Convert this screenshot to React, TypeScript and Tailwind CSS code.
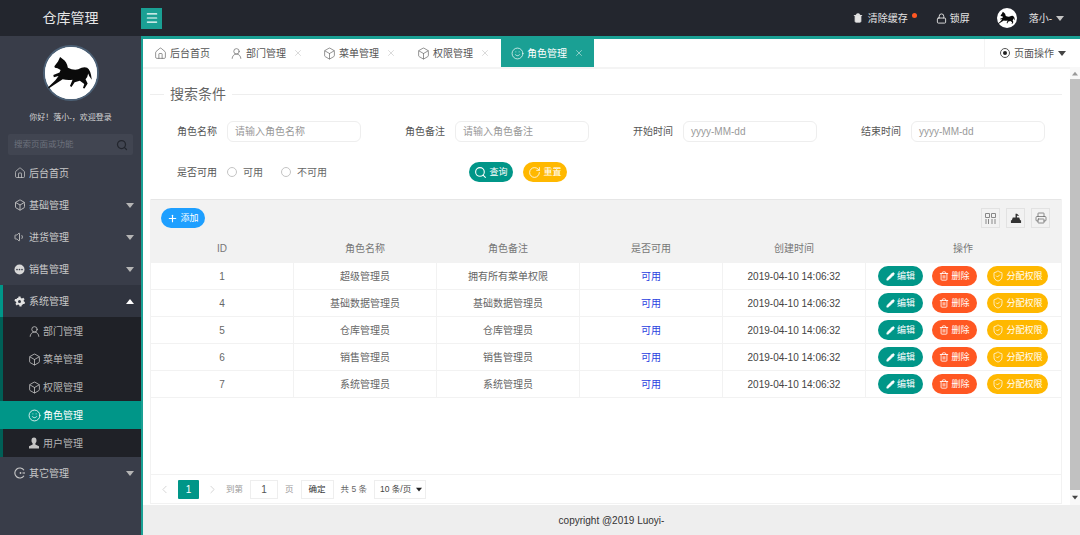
import { Box, ChevronLeft, ChevronRight, Home, Lock, Menu, Pencil, Plus, Printer, RotateCw, Search, ShieldCheck, Smile, Trash2, UserRound, Volume1, X } from "lucide-react";
import type { ReactNode } from "react";

const roles = [
  { id: 1, name: "超级管理员", note: "拥有所有菜单权限" },
  { id: 4, name: "基础数据管理员", note: "基础数据管理员" },
  { id: 5, name: "仓库管理员", note: "仓库管理员" },
  { id: 6, name: "销售管理员", note: "销售管理员" },
  { id: 7, name: "系统管理员", note: "系统管理员" },
];

function Horse({ size }: { size: number }) {
  return (
    <svg width={size} height={size} viewBox="0 0 50 50" className="shrink-0">
      <circle cx="25" cy="25" r="25" fill="#fff" />
      <path
        d="M14.500 9.500 L17 11.500 Q21 14 22 20 Q27 22.500 32 21.500 Q37 18.500 40.500 20 Q44 22 45 31.500 L42.500 28 L41.500 25.500 Q41 29.500 39 31 L41 35 L38 40 L36.500 39.500 L37.800 35.500 L33.500 32.500 Q31 33 28.500 34 L25.500 38.500 L24 37.500 L26.500 31.500 Q21 32 17 31 L10 35.500 L3.500 40 L3 38.800 L10 32 L13 27.800 L8.500 29 L8 27 L14 24.500 L15 22 L12 20.500 L9.500 20 L9 18.500 L12.500 14 Z"
        fill="#0a0a0a"
      />
    </svg>
  );
}

function Caret({ up, className }: { up?: boolean; className: string }) {
  return (
    <span
      className={`h-0 w-0 border-x-[4px] border-x-transparent ${up ? "border-b-[5px]" : "border-t-[5px]"} ${className}`}
    />
  );
}

function ChatIcon() {
  return (
    <svg width="11" height="11" viewBox="0 0 22 22" fill="#d8d8d8">
      <path d="M11 1a10 10 0 1 0 0 20 10 10 0 0 0 0-20Z" />
      <circle cx="6" cy="11" r="1.7" fill="#393d49" />
      <circle cx="11" cy="11" r="1.7" fill="#393d49" />
      <circle cx="16" cy="11" r="1.7" fill="#393d49" />
    </svg>
  );
}

function GearIcon() {
  return (
    <svg width="11" height="11" viewBox="0 0 22 22" fill="#e2e2e2">
      <path d="M9 1h4l.6 3 2.4 1 2.6-1.600 2.600 3.200-2 2.200.5 2.400 2.300 1-1 4-3-.2-1.500 2-1 .2-.5 3h-4l-.6-3-2.400-1-2.600 1.600-2.600-3.200 2-2.200L3.300 11 1 10l1-4 3 .2L6.500 4 8.400 3.800Z" />
      <circle cx="11" cy="11" r="3" fill="#30343f" />
    </svg>
  );
}

function OtherIcon() {
  return (
    <svg width="12" height="12" viewBox="0 0 24 24" fill="none" stroke="#c8c8c8" strokeWidth="2.2">
      <path d="M20 6.500A10 10 0 1 0 20 17.500" />
      <circle cx="13" cy="12" r="1.800" fill="#c8c8c8" stroke="none" />
      <path d="M17 12h5" />
    </svg>
  );
}

function PersonIcon() {
  return (
    <svg width="12" height="12" viewBox="0 0 24 24" fill="#c4c4c4">
      <path d="M12 1c3.500 0 5 2.600 5 6 0 2.600-1 4.600-2.300 5.800v2.200L22 18.500V23H2v-4.500L9.300 15v-2.200C8 11.600 7 9.600 7 7c0-3.400 1.500-6 5-6Z" />
    </svg>
  );
}

function NavRow({ icon, label, open }: { icon: ReactNode; label: string; open?: boolean }) {
  return (
    <div className={`relative flex h-[32px] items-center pl-[14px] pr-[7px] text-[10px] text-[#c8c8c8] ${open ? "bg-[#30343f]" : ""}`}>
      {open && <span className="absolute inset-y-0 left-0 w-[3px] bg-[#009688]" />}
      <span className="flex w-[15px] shrink-0 items-center">{icon}</span>
      <span className="flex-1">{label}</span>
      <Caret up={open} className={open ? "border-b-white" : "border-t-[#b5b5b5]"} />
    </div>
  );
}

function SubRow({ icon, label, active }: { icon: ReactNode; label: string; active?: boolean }) {
  return (
    <div className={`flex h-[28px] items-center text-[10px] ${active ? "-ml-[3px] bg-[#009688] pl-[28px] text-white" : "pl-[25px] text-[#b4b4b4]"}`}>
      <span className="flex w-[15px] shrink-0 items-center">{icon}</span>
      {label}
    </div>
  );
}

function Sidebar() {
  const iconCls = "h-[12px] w-[12px] text-[#c4c4c4]";
  const subIcon = "h-[13px] w-[13px] text-[#c4c4c4]";
  return (
    <aside className="flex w-[141px] shrink-0 flex-col bg-[#393d49]">
      <div className="flex flex-col items-center pt-[9px]">
        <div className="rounded-full border-[2px] border-[#4d6176] bg-white">
          <Horse size={52} />
        </div>
        <p className="mt-[11px] text-[8px] leading-[12px] text-[#d4d4d4]">你好！落小-，欢迎登录</p>
      </div>
      <div className="mx-[8px] mt-[10px] flex h-[21px] items-center justify-between rounded-[2px] bg-[#414551] pl-[6px] pr-[5px] text-[8.5px] text-[#6d717c]">
        搜索页面或功能
        <Search className="h-[12px] w-[12px] text-[#23262e]" strokeWidth={2.5} />
      </div>
      <nav className="mt-[2px]">
        <div className="flex h-[32px] items-center pl-[14px] text-[10px] text-[#c8c8c8]">
          <Home className="mr-[3px] h-[12px] w-[12px]" strokeWidth={1.5} />
          后台首页
        </div>
        <NavRow icon={<Box className={iconCls} strokeWidth={1.8} />} label="基础管理" />
        <NavRow icon={<Volume1 className={iconCls} strokeWidth={1.8} />} label="进货管理" />
        <NavRow icon={<ChatIcon />} label="销售管理" />
        <NavRow icon={<GearIcon />} label="系统管理" open />
        <div className="border-l-[3px] border-[#005f56] bg-[#1f2127]">
          <SubRow icon={<UserRound className={subIcon} strokeWidth={1.5} />} label="部门管理" />
          <SubRow icon={<Box className={subIcon} strokeWidth={1.5} />} label="菜单管理" />
          <SubRow icon={<Box className={subIcon} strokeWidth={1.5} />} label="权限管理" />
          <SubRow icon={<Smile className="h-[13px] w-[13px] text-white" strokeWidth={1.5} />} label="角色管理" active />
          <SubRow icon={<PersonIcon />} label="用户管理" />
        </div>
        <NavRow icon={<OtherIcon />} label="其它管理" />
      </nav>
    </aside>
  );
}

function Tab({ icon, label, closable = true, active, className }: { icon: ReactNode; label: string; closable?: boolean; active?: boolean; className?: string }) {
  return (
    <div className={`flex h-full items-center gap-[4px] px-[10px] text-[10px] ${active ? "bg-[#1aa094] text-white" : "text-[#555]"} ${className ?? ""}`}>
      <span className="flex w-[12px] items-center">{icon}</span>
      <span className="w-[40px]">{label}</span>
      {closable && <X className={`ml-[3px] h-[10px] w-[10px] ${active ? "text-[#cfe9e6]" : "text-[#c4c4c4]"}`} strokeWidth={1.5} />}
    </div>
  );
}

function Field({ label, placeholder }: { label: string; placeholder: string }) {
  return (
    <div className="flex items-center">
      <span className="w-[40px] text-[10px] text-[#555]">{label}</span>
      <div className="ml-[10px] flex h-[21px] w-[134px] items-center rounded-[6px] border border-[#eeeeee] px-[7px] text-[10px] text-[#999]">
        {placeholder}
      </div>
    </div>
  );
}

function Pill({ color, icon, label, className }: { color: string; icon: ReactNode; label: string; className?: string }) {
  return (
    <div className={`flex h-[20px] items-center justify-center gap-[2px] rounded-full text-[9px] text-white ${color} ${className ?? ""}`}>
      {icon}
      <span className="pt-[2px]">{label}</span>
    </div>
  );
}

function ToolBtn({ children }: { children: ReactNode }) {
  return <div className="flex h-[20px] w-[19px] items-center justify-center border border-[#e2e2e2]">{children}</div>;
}

const cell = "flex items-center justify-center border-r border-[#f2f2f2] text-[10px]";

function RoleTable() {
  return (
    <div className="grid grid-cols-[143px_143px_143px_143px_143px_195px]">
      {["ID", "角色名称", "角色备注", "是否可用", "创建时间", "操作"].map((h) => (
        <div key={h} className={`${cell} h-[27px] bg-[#f2f2f2] pb-[2px] text-[#777]`}>
          {h}
        </div>
      ))}
      {roles.map((r) => (
        <div key={r.id} className="col-span-6 grid h-[27px] grid-cols-subgrid border-b border-[#f2f2f2]">
          <div className={`${cell} text-[#666]`}>{r.id}</div>
          <div className={`${cell} text-[#666]`}>{r.name}</div>
          <div className={`${cell} text-[#666]`}>{r.note}</div>
          <div className={`${cell} text-[#2a3fe0]`}>可用</div>
          <div className={`${cell} text-[#444]`}>2019-04-10 14:06:32</div>
          <div className="flex items-center pl-[12px]">
            <Pill color="bg-[#009688]" className="w-[45px]" label="编辑" icon={<Pencil className="h-[9px] w-[9px]" fill="white" />} />
            <Pill color="bg-[#ff5722]" className="ml-[9px] w-[45px]" label="删除" icon={<Trash2 className="h-[10px] w-[10px]" />} />
            <Pill color="bg-[#ffb800]" className="ml-[10px] w-[61px]" label="分配权限" icon={<ShieldCheck className="h-[12px] w-[12px]" strokeWidth={1.5} />} />
          </div>
        </div>
      ))}
    </div>
  );
}

function Pagination() {
  return (
    <div className="flex h-[30px] items-center border-y border-[#f2f2f2] pl-[7px] text-[8.5px] text-[#999]">
      <ChevronLeft className="h-[13px] w-[13px] text-[#ccc]" strokeWidth={1.5} />
      <span className="ml-[7px] flex h-[19px] w-[21px] items-center justify-center rounded-[1px] bg-[#009688] text-[10px] text-white">1</span>
      <ChevronRight className="ml-[7px] h-[13px] w-[13px] text-[#ccc]" strokeWidth={1.5} />
      <span className="ml-[7px]">到第</span>
      <span className="ml-[7px] flex h-[19px] w-[28px] items-center justify-center border border-[#eeeeee] text-[10px] text-[#555]">1</span>
      <span className="ml-[7px]">页</span>
      <span className="ml-[7px] flex h-[19px] w-[33px] items-center justify-center border border-[#eeeeee] text-[#333]">确定</span>
      <span className="ml-[7px] text-[#666]">共 5 条</span>
      <span className="ml-[7px] flex h-[19px] w-[52px] items-center justify-between whitespace-nowrap border border-[#eeeeee] pl-[5px] pr-[2px] text-[#444]">
        10 条/页
        <Caret className="scale-75 border-t-[#222]" />
      </span>
    </div>
  );
}

export default function App() {
  const tabIcon = "h-[13px] w-[13px] text-[#666] shrink-0";
  return (
    <div className="flex h-[535px] w-[1080px] flex-col overflow-hidden bg-white font-['Liberation_Sans','Noto_Sans_CJK_SC',sans-serif]">
      <header className="flex h-[36px] shrink-0 items-center bg-[#23262e] text-[10px] text-[#e4e4e4]">
        <div className="w-[141px] text-center text-[14px] text-[#e6e6e6]">仓库管理</div>
        <div className="flex h-[21px] w-[21px] items-center justify-center bg-[#1aa094]">
          <Menu className="h-[14px] w-[14px] text-white" />
        </div>
        <div className="ml-auto flex items-center pr-[16px]">
          <Trash2 className="h-[10px] w-[10px]" fill="#e4e4e4" />
          <span className="ml-[5px]">清除缓存</span>
          <span className="mb-[6px] ml-[4px] h-[5px] w-[5px] rounded-full bg-[#ff5722]" />
          <Lock className="ml-[19px] h-[11px] w-[11px]" />
          <span className="ml-[3px]">锁屏</span>
          <span className="ml-[27px]"><Horse size={20} /></span>
          <span className="ml-[12px]">落小-</span>
          <Caret className="ml-[4px] border-t-[#c4c4c4]" />
        </div>
      </header>
      <div className="flex min-h-0 flex-1">
        <Sidebar />
        <main className="flex min-w-0 flex-1 flex-col border-l-[2px] border-t-[3px] border-[#1aa094]">
          <div className="flex h-[28px] shrink-0 items-center">
            <Tab className="pl-[11px]" icon={<Home className={tabIcon} strokeWidth={1.3} />} label="后台首页" closable={false} />
            <Tab icon={<UserRound className={tabIcon} strokeWidth={1.3} />} label="部门管理" />
            <Tab icon={<Box className={tabIcon} strokeWidth={1.3} />} label="菜单管理" />
            <Tab className="ml-[1px]" icon={<Box className={tabIcon} strokeWidth={1.3} />} label="权限管理" />
            <Tab active className="ml-[1px]" icon={<Smile className="h-[13px] w-[13px] shrink-0 text-white" strokeWidth={1.3} />} label="角色管理" />
            <div className="ml-auto flex h-full w-[96px] items-center border-l border-[#f4f4f4] pl-[15px] text-[10px] text-[#555]">
              <span className="flex h-[10px] w-[10px] items-center justify-center rounded-full border border-[#555]">
                <span className="h-[4px] w-[4px] rounded-full bg-[#222]" />
              </span>
              <span className="ml-[4px]">页面操作</span>
              <Caret className="ml-[4px] border-t-[#444]" />
            </div>
          </div>
          <div className="flex min-h-0 flex-1">
            <div className="flex min-w-0 flex-1 flex-col border-t-[2px] border-[#f4f4f4] px-[7px] pt-[16px]">
              <div className="mr-[1px] flex items-center gap-[6px]">
                <span className="h-[1px] w-[14px] bg-[#eeeeee]" />
                <span className="text-[14px] leading-[18px] text-[#666]">搜索条件</span>
                <span className="h-[1px] flex-1 bg-[#eeeeee]" />
              </div>
              <div className="ml-[27px] mt-[18px] flex gap-[44px]">
                <Field label="角色名称" placeholder="请输入角色名称" />
                <Field label="角色备注" placeholder="请输入角色备注" />
                <Field label="开始时间" placeholder="yyyy-MM-dd" />
                <Field label="结束时间" placeholder="yyyy-MM-dd" />
              </div>
              <div className="ml-[27px] mt-[20px] flex h-[20px] items-center text-[10px] text-[#555]">
                <span className="w-[40px]">是否可用</span>
                <span className="ml-[10px] h-[10px] w-[10px] rounded-full border border-[#c4c4c4]" />
                <span className="ml-[6px] text-[#666]">可用</span>
                <span className="ml-[18px] h-[10px] w-[10px] rounded-full border border-[#c4c4c4]" />
                <span className="ml-[6px] text-[#666]">不可用</span>
                <Pill color="bg-[#009688]" className="ml-[142px] w-[44px]" label="查询" icon={<Search className="h-[13px] w-[13px]" />} />
                <Pill color="bg-[#ffb800]" className="ml-[10px] w-[44px]" label="重置" icon={<RotateCw className="h-[13px] w-[13px]" strokeWidth={1.5} />} />
              </div>
              <div className="mr-[1px] mt-[17px] border-x border-[#f2f2f2]">
                <div className="flex h-[37px] items-center justify-between border-t border-[#e6e6e6] bg-[#f2f2f2] pl-[10px] pr-[11px]">
                  <Pill color="bg-[#1e9fff]" className="w-[44px]" label="添加" icon={<Plus className="h-[11px] w-[11px]" strokeWidth={2.5} />} />
                  <div className="flex gap-[6px]">
                    <ToolBtn>
                      <svg width="13" height="13" viewBox="0 0 13 13" fill="none" stroke="#888">
                        <path d="M1.500 1.500h4v4h-4zM7.500 1.500h4v4h-4zM2 7v5M4.500 7v5M8 7v5M11 7v5" />
                      </svg>
                    </ToolBtn>
                    <ToolBtn>
                      <svg width="12" height="12" viewBox="0 0 13 13" fill="#333">
                        <path d="M1 9h11v3H1zM3 6h7l1 3H2zM6 2h1.500v4H6zM7.500 2 10 4H7.500z" />
                      </svg>
                    </ToolBtn>
                    <ToolBtn><Printer className="h-[12px] w-[12px] text-[#666]" strokeWidth={1.5} /></ToolBtn>
                  </div>
                </div>
                <RoleTable />
                <div className="h-[76px]" />
                <Pagination />
              </div>
            </div>
            <div className="flex w-[10px] shrink-0 flex-col items-center bg-[#f8f8f8]">
              <div className="flex h-[12px] items-center"><Caret up className="scale-75 border-b-[#999]" /></div>
              <div className="h-[411px] w-full bg-[#c1c1c1]" />
              <div className="flex flex-1 items-center"><Caret className="scale-75 border-t-[#444]" /></div>
            </div>
          </div>
          <footer className="flex h-[30px] shrink-0 items-center justify-center bg-[#eeeeee] text-[10px] text-[#333]">
            copyright @2019 Luoyi-
          </footer>
        </main>
      </div>
    </div>
  );
}
